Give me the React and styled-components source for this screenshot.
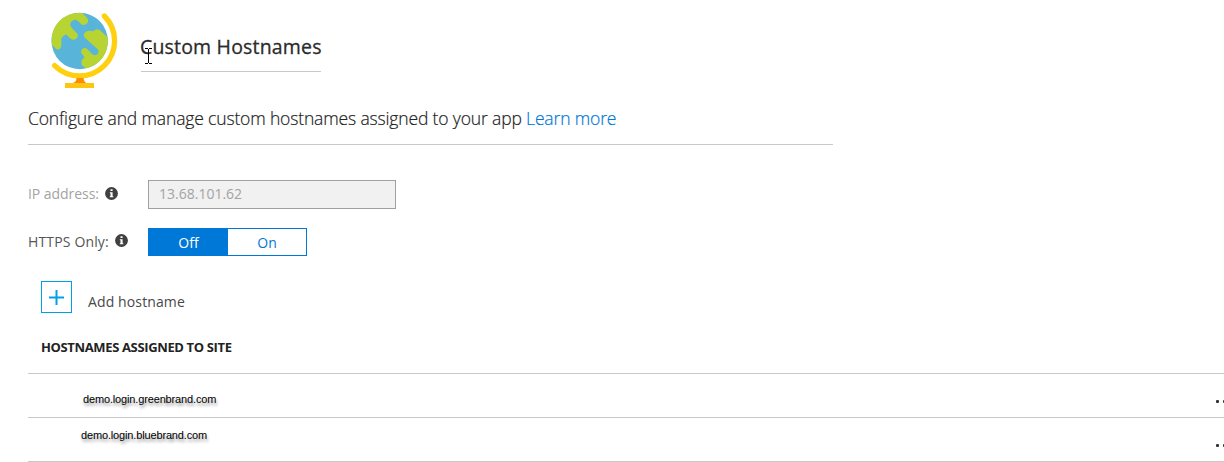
import React from "react";
import styled, { createGlobalStyle } from "styled-components";

const GlobalStyle = createGlobalStyle`
  html, body { margin: 0; background: #fff; overflow: hidden; }
  * { box-sizing: border-box; }
`;

const Page = styled.main`
  width: 1224px;
  height: 462px;
  overflow: hidden;
  padding-left: 28px;
  background: #fff;
  color: #222;
  font-family: "Open Sans", "Noto Sans", sans-serif;
  font-size: 14px;
  white-space: nowrap;
`;

const Header = styled.header`
  display: flex;
  height: 100px;
  padding-left: 12px;
`;

const TitleBlock = styled.div`
  position: relative;
  width: 180px;
  height: 72px;
  margin-left: 1px;
  padding-top: 33px;
  border-bottom: 1px solid #c8c8c8;
`;

const Title = styled.h1`
  margin: 0 0 0 -1px;
  font-size: 19.5px;
  font-weight: 500;
  line-height: 28px;
  letter-spacing: 0.18px;
  -webkit-text-stroke: 0.3px #2b2b2b;
  color: #2b2b2b;
`;

const Cursor = styled.svg`
  position: absolute;
  left: 4px;
  top: 48px;
`;

const Intro = styled.p`
  width: 805px;
  height: 45px;
  margin: 0;
  padding-top: 4px;
  border-bottom: 1px solid #c8c8c8;
  font-size: 17.5px;
  font-weight: 300;
  line-height: 28px;
  letter-spacing: -0.15px;
  -webkit-text-stroke: 0.2px currentColor;
`;

const Link = styled.a`
  color: #0078d7;
`;

const Form = styled.section`
  display: flex;
  flex-direction: column;
  gap: 19px;
  padding-top: 35px;
`;

const Field = styled.div`
  display: flex;
  height: ${(p) => p.$height}px;
`;

const Label = styled.label`
  display: flex;
  gap: 6px;
  width: 120px;
  line-height: 28px;
  color: ${(p) => (p.$muted ? "#a3a3a3" : "#555")};
`;

const LabelText = styled.span`
  width: ${(p) => p.$width}px;
  letter-spacing: ${(p) => p.$track}px;
`;

const InfoSvg = styled.svg`
  margin-top: ${(p) => p.$top}px;
`;

const AddressBox = styled.div`
  width: 248px;
  height: 29px;
  padding-left: 10px;
  border: 1px solid #a0a0a0;
  background: #f1f1f1;
  color: #a3a3a3;
  line-height: 26px;
`;

const Toggle = styled.div`
  display: flex;
  width: 159px;
  height: 28px;
  border: 1px solid #0078d7;
`;

const Option = styled.div`
  width: ${(p) => (p.$active ? 79 : 78)}px;
  text-align: center;
  line-height: 27px;
  background: ${(p) => (p.$active ? "#0078d7" : "#fff")};
  color: ${(p) => (p.$active ? "#fff" : "#0078d7")};
`;

const AddRow = styled.div`
  display: flex;
  gap: 16px;
  height: 32px;
  margin: 25px 0 0 13px;
`;

const PlusBox = styled.div`
  display: grid;
  place-items: center;
  width: 31px;
  height: 32px;
  border: 1px solid #009fe8;
`;

const AddText = styled.span`
  padding-top: 7px;
  line-height: 28px;
  letter-spacing: 0.12px;
  color: #484848;
`;

const ListHeading = styled.h2`
  height: 60px;
  margin: 0;
  padding: 24px 0 0 13px;
  font-size: 13px;
  font-weight: 700;
  line-height: 20px;
  letter-spacing: -0.36px;
  color: #222;
`;

const List = styled.div`
  width: 1196px;
  border-bottom: 1px solid #c8c8c8;
`;

const HostRow = styled.div`
  display: flex;
  justify-content: space-between;
  height: 44px;
  border-top: 1px solid #c8c8c8;
`;

const HostName = styled.span`
  padding: ${(p) => p.$top}px 0 0 ${(p) => p.$left}px;
  font-family: "Liberation Sans", Arial, sans-serif;
  font-size: 11px;
  line-height: 16px;
  letter-spacing: -0.15px;
  color: #000;
  text-shadow: 1px 3px 3px rgba(0, 0, 0, 0.4);
`;

const More = styled.div`
  display: flex;
  gap: 4px;
  width: 8px;
  padding-top: 26px;
  overflow: hidden;
`;

const Dot = styled.i`
  flex: none;
  width: 3px;
  height: 3px;
  border-radius: 1px;
  background: #333;
`;

function Globe() {
  return (
    <svg width="100" height="100" viewBox="0 0 300 300" aria-hidden="true">
      <circle cx="119" cy="123" r="84.5" fill="#59b4d9" />
      <path
        fill="#b8d432"
        d="M125 39C72 35 34 74 35 124Q35 132 37 136L48 146Q54 151 60 146Q64 142 64 135V122Q63 115 67 110L78 103L93 117Q100 122 108 117Q117 109 111 100L95 83Q87 73 94 65Q103 54 114 63L124 73Q134 79 142 69Q147 62 141 53L127 39Z"
      />
      <path
        fill="#b8d432"
        d="M203 112L180 91Q168 83 161 94Q147 90 138 95Q128 102 133 112L173 148Q179 156 172 163Q165 168 157 163L141 146Q133 141 126 148Q121 155 126 162L134 172Q125 178 124 188Q124 195 130 199L138 205C178 196 206 162 203 120Z"
      />
      <path d="M193 48A105 105 0 0 1 44 197" fill="none" stroke="#fed010" strokeWidth="16" strokeLinecap="round" />
      <path d="M109 234H131Q130 243 139 249H99Q111 244 109 234Z" fill="#ff8c00" />
      <path d="M75 249H162V264H75Z" fill="#fcc712" />
    </svg>
  );
}

function InfoIcon({ top }) {
  return (
    <InfoSvg $top={top} width="13" height="13" viewBox="0 0 13 13">
      <circle cx="6.5" cy="6.5" r="6.4" fill="#404040" />
      <path d="M5.5 2.3H7.6V4.1H5.5ZM4.8 5.2H7.6V9.2H8.3V10.3H4.8V9.2H5.5V6.3H4.8Z" fill="#fff" />
    </InfoSvg>
  );
}

const hosts = [
  { name: "demo.login.greenbrand.com", left: 55, top: 17 },
  { name: "demo.login.bluebrand.com", left: 53, top: 9 },
];

export default function App() {
  return (
    <Page>
      <GlobalStyle />
      <Header>
        <Globe />
        <TitleBlock>
          <Title>Custom Hostnames</Title>
          <Cursor width="8" height="16" viewBox="0 0 8 16">
            <path d="M0 .5H3M4 .5H7M3.5 1V15M0 15.5H3M4 15.5H7" fill="none" stroke="#000" />
          </Cursor>
        </TitleBlock>
      </Header>
      <Intro>
        Configure and manage custom hostnames assigned to your app <Link>Learn more</Link>
      </Intro>
      <Form>
        <Field $height={29}>
          <Label $muted>
            <LabelText $width={71} $track={-0.05}>IP address:</LabelText>
            <InfoIcon top={7} />
          </Label>
          <AddressBox>13.68.101.62</AddressBox>
        </Field>
        <Field $height={28}>
          <Label>
            <LabelText $width={81} $track={0.15}>HTTPS Only:</LabelText>
            <InfoIcon top={6} />
          </Label>
          <Toggle>
            <Option $active>Off</Option>
            <Option>On</Option>
          </Toggle>
        </Field>
      </Form>
      <AddRow>
        <PlusBox>
          <svg width="15" height="15" viewBox="0 0 15 15">
            <path d="M7.5 0V15M0 7.5H15" stroke="#009fe8" strokeWidth="2" />
          </svg>
        </PlusBox>
        <AddText>Add hostname</AddText>
      </AddRow>
      <ListHeading>HOSTNAMES ASSIGNED TO SITE</ListHeading>
      <List>
        {hosts.map((h) => (
          <HostRow key={h.name}>
            <HostName $left={h.left} $top={h.top}>{h.name}</HostName>
            <More>
              <Dot />
              <Dot />
              <Dot />
            </More>
          </HostRow>
        ))}
      </List>
    </Page>
  );
}
